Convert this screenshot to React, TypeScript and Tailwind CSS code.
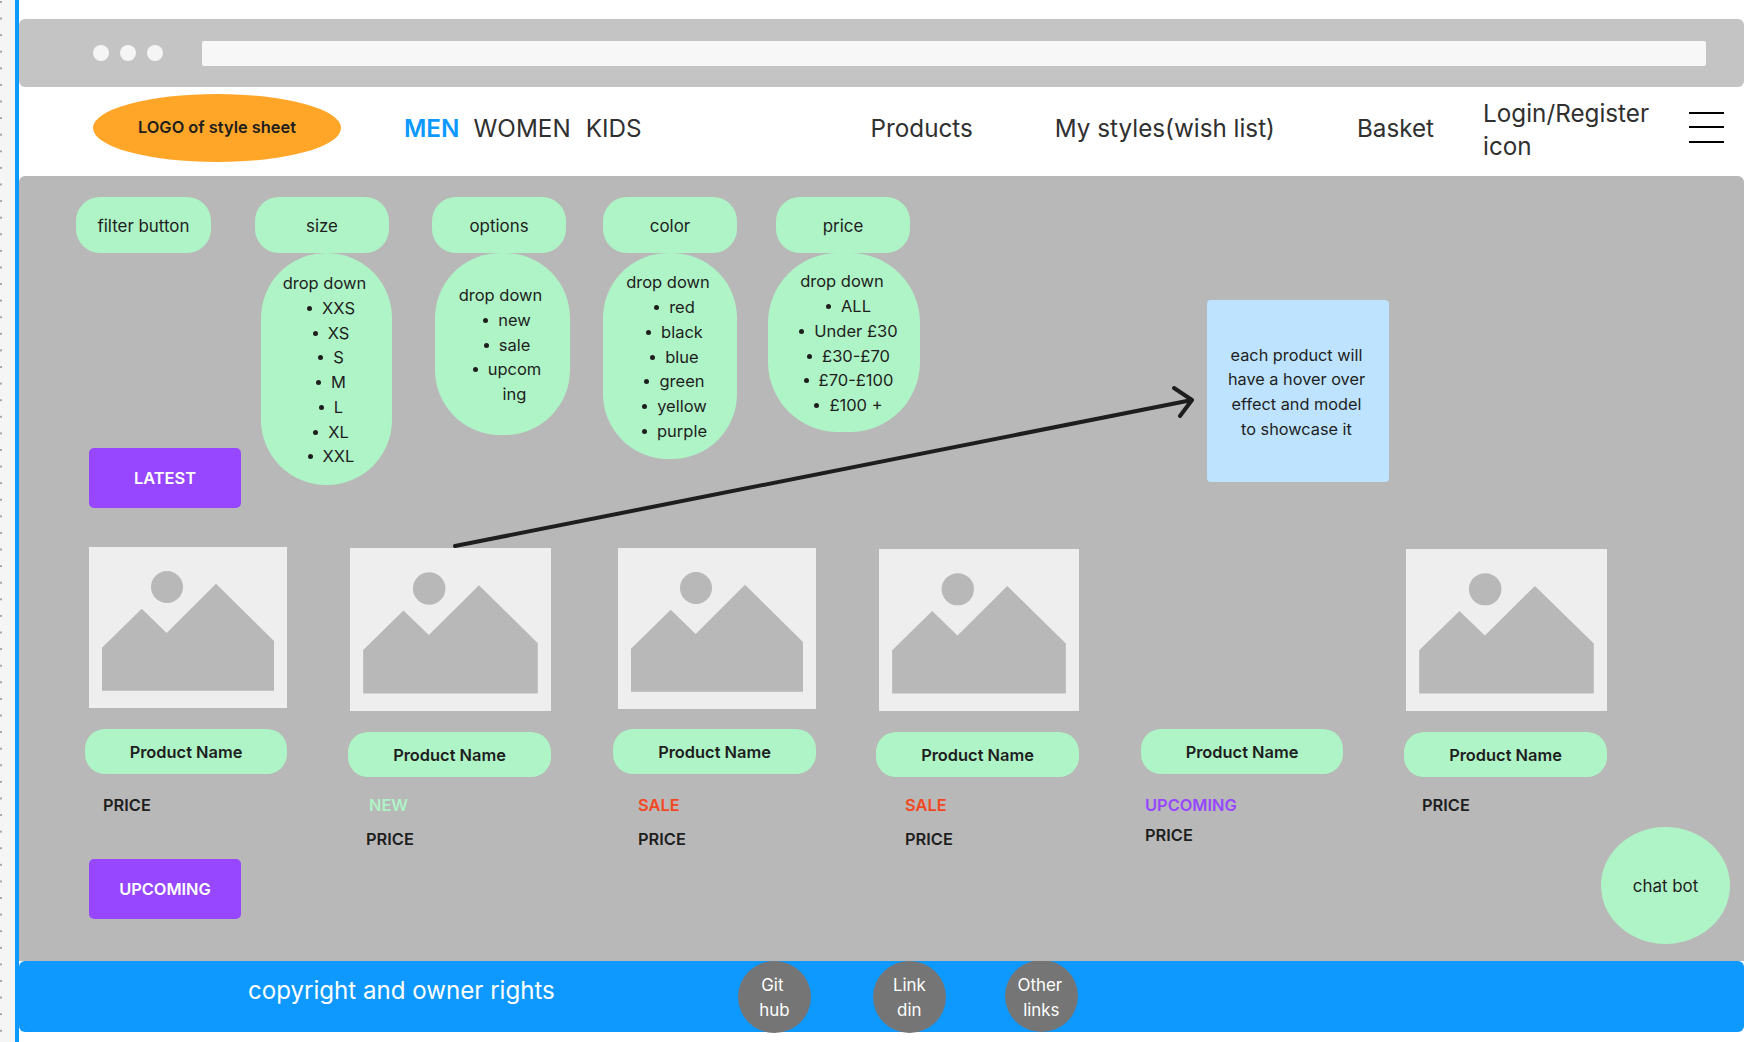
const navText = "text-[24.25px] text-[#303030]";
const pill = "flex items-center justify-center h-[56px] pt-[4px] rounded-[24px] bg-[#aff4c6] text-[16.9px] text-[#1e1e1e]";
const blob = "flex flex-col justify-center pt-[2px] bg-[#aff4c6] text-[16.5px] leading-[24.75px] text-[#1e1e1e] text-center";
const purpleBtn = "flex items-center justify-center w-[152px] h-[60px] pt-[1px] rounded-[5px] bg-[#9747ff] text-[16.4px] font-semibold text-white";
const social = "flex flex-col items-center justify-center w-[73px] h-[72px] pt-[3px] rounded-[50%] bg-[#757575] text-[16.9px] leading-[24.75px] text-white";

function Dropdown({ items, className }: { items: string[][]; className: string }) {
  return (
    <div className={`${blob} ${className}`}>
      <div className="pr-[4px]">drop down</div>
      <ul className="pl-[24px]">
        {items.map((lines) => (
          <li key={lines[0]}>
            <span className="relative inline-block">
              {/* bullet sits just left of the first line */}
              <span className="absolute -left-[15px] top-[10px] w-[5px] h-[5px] rounded-full bg-[#1e1e1e]" />
              {lines.map((line) => (
                <span key={line} className="block">
                  {line}
                </span>
              ))}
            </span>
          </li>
        ))}
      </ul>
    </div>
  );
}

function FilterColumn({ label, className, children }: { label: string; className: string; children: React.ReactNode }) {
  return (
    <div className={`flex flex-col w-[134px] ${className}`}>
      <div className={`${pill} w-[134px]`}>{label}</div>
      {children}
    </div>
  );
}

// placeholder thumbnail, stretched to whatever box it sits in
function Thumb({ className }: { className: string }) {
  return (
    <div className={`bg-[#eeeeee] ${className}`}>
      <svg viewBox="0 0 198 161" preserveAspectRatio="none" className="w-full h-full block">
        <circle cx="78" cy="40" r="16" fill="#b8b8b8" />
        <polygon points="13,100.7 52.7,61.7 77.7,86 127,36.7 185,94 185,143.7 13,143.7" fill="#b8b8b8" />
      </svg>
    </div>
  );
}

function ProductPill({ className }: { className: string }) {
  return (
    <div className={`flex items-center justify-center h-[45px] pt-[1px] rounded-[20px] bg-[#aff4c6] text-[16.4px] font-semibold text-[#1e1e1e] ${className}`}>
      Product Name
    </div>
  );
}

const toLines = (items: string[]) => items.map((item) => [item]);

export default function App() {
  return (
    <div className="flex w-[1764px] h-[1042px] overflow-hidden bg-white font-['Inter',sans-serif]">
      {/* Left ruler and selection line */}
      <div className="w-[15px] h-full bg-[#f5f5f5] bg-[radial-gradient(circle_at_1px_2px,#a8a8a8_1px,transparent_1.5px)] bg-[length:15px_16.6px]" />
      <div className="w-[4px] h-full bg-[#0d99ff]" />

      <div className="flex flex-col w-[1725px] pt-[19px]">
        {/* Browser chrome */}
        <div className="flex items-center h-[68px] rounded-[6px] bg-[#c4c4c4]">
          <div className="flex gap-[11px] ml-[74px]">
            <span className="w-[16px] h-[16px] rounded-full bg-[#f5f5f5]" />
            <span className="w-[16px] h-[16px] rounded-full bg-[#f5f5f5]" />
            <span className="w-[16px] h-[16px] rounded-full bg-[#f5f5f5]" />
          </div>
          <div className="ml-[39px] w-[1504px] h-[25px] rounded-[2px] bg-[#f7f7f7]" />
        </div>

        {/* Nav */}
        <div className="flex items-center h-[89px] pb-[4px]">
          <div className="flex items-center justify-center ml-[74px] -mt-[4px] w-[248px] h-[68px] rounded-[50%] bg-[#ffa629] text-[16.4px] font-semibold text-[#1e1e1e]">
            LOGO of style sheet
          </div>
          <span className="ml-[63px] text-[24.25px] font-semibold text-[#0d99ff]">MEN</span>
          <span className={`ml-[14px] ${navText}`}>WOMEN</span>
          <span className={`ml-[15px] ${navText}`}>KIDS</span>
          <span className={`ml-[229px] ${navText}`}>Products</span>
          <span className={`ml-[82px] ${navText}`}>My styles(wish list)</span>
          <span className={`ml-[82px] ${navText}`}>Basket</span>
          <span className={`ml-[49px] w-[180px] leading-[33px] ${navText}`}>Login/Register icon</span>
          <div className="flex flex-col gap-[12.5px] ml-[26px] mb-[5px]">
            <span className="block w-[35px] h-[2px] bg-black" />
            <span className="block w-[35px] h-[2px] bg-black" />
            <span className="block w-[35px] h-[2px] bg-black" />
          </div>
        </div>

        {/* Main canvas */}
        <div className="relative h-[785px] rounded-t-[6px] bg-[#b8b8b8]">
          <div className="flex items-start h-[371px] pt-[21px]">
            <div className="flex flex-col w-[135px] ml-[57px]">
              <div className={`${pill} w-[135px]`}>filter button</div>
              <div className={`${purpleBtn} ml-[13px] mt-[195px]`}>LATEST</div>
            </div>

            <FilterColumn label="size" className="ml-[44px]">
              <Dropdown
                items={toLines(["XXS", "XS", "S", "M", "L", "XL", "XXL"])}
                className="ml-[6px] w-[131px] h-[232px] rounded-[65px]"
              />
            </FilterColumn>

            <FilterColumn label="options" className="ml-[43px]">
              <Dropdown
                items={[["new"], ["sale"], ["upcom", "ing"]]}
                className="ml-[3px] w-[135px] h-[182px] rounded-[65px]"
              />
            </FilterColumn>

            <FilterColumn label="color" className="ml-[37px]">
              <Dropdown
                items={toLines(["red", "black", "blue", "green", "yellow", "purple"])}
                className="w-[134px] h-[206px] rounded-[65px]"
              />
            </FilterColumn>

            <FilterColumn label="price" className="ml-[39px]">
              <Dropdown
                items={toLines(["ALL", "Under £30", "£30-£70", "£70-£100", "£100 +"])}
                className="-ml-[8px] w-[152px] h-[179px] rounded-[70px]"
              />
            </FilterColumn>

            <div className="flex items-center justify-center ml-[297px] mt-[103px] w-[182px] h-[182px] pt-[2px] pr-[3px] rounded-[4px] bg-[#bde3ff] text-[16.3px] leading-[24.75px] text-center text-[#1e1e1e]">
              <p>
                each product will
                <br />
                have a hover over
                <br />
                effect and model
                <br />
                to showcase it
              </p>
            </div>
          </div>

          {/* Products */}
          <div className="flex items-start pl-[66px] text-[16.4px] font-semibold text-[#1e1e1e]">
            <div className="w-[202px]">
              <Thumb className="ml-[4px] w-[198px] h-[161px]" />
              <ProductPill className="mt-[21px]" />
              <div className="mt-[19px] ml-[18px]">PRICE</div>
              <div className={`${purpleBtn} ml-[4px] mt-[41px]`}>UPCOMING</div>
            </div>

            <div className="ml-[61px] w-[203px]">
              <Thumb className="mt-[1px] ml-[2px] w-[201px] h-[163px]" />
              <ProductPill className="mt-[21px]" />
              <div className="mt-[16px] ml-[21px] text-[#aff4c6]">NEW</div>
              <div className="mt-[9px] ml-[18px]">PRICE</div>
            </div>

            <div className="ml-[62px] w-[203px]">
              <Thumb className="mt-[1px] ml-[5px] w-[198px] h-[161px]" />
              <ProductPill className="mt-[20px]" />
              <div className="mt-[19px] ml-[25px] text-[#f24822]">SALE</div>
              <div className="mt-[9px] ml-[25px]">PRICE</div>
            </div>

            <div className="ml-[60px] w-[203px]">
              <Thumb className="mt-[2px] ml-[3px] w-[200px] h-[162px]" />
              <ProductPill className="mt-[21px]" />
              <div className="mt-[16px] ml-[29px] text-[#f24822]">SALE</div>
              <div className="mt-[9px] ml-[29px]">PRICE</div>
            </div>

            <div className="ml-[62px] w-[202px]">
              <ProductPill className="mt-[182px]" />
              <div className="mt-[19px] ml-[4px] text-[#9747ff]">UPCOMING</div>
              <div className="mt-[5px] ml-[4px]">PRICE</div>
            </div>

            <div className="ml-[61px] w-[203px]">
              <Thumb className="mt-[2px] ml-[2px] w-[201px] h-[162px]" />
              <ProductPill className="mt-[21px]" />
              <div className="mt-[16px] ml-[18px]">PRICE</div>
            </div>
          </div>

          {/* Arrow from product to note */}
          <svg className="absolute left-0 top-0 w-[1725px] h-[784px] pointer-events-none" viewBox="0 0 1725 784" fill="none">
            <path
              d="M436 370 L1173 224 M1155 212 L1173 224 L1161 240"
              stroke="#1e1e1e"
              strokeWidth="4"
              strokeLinecap="round"
              strokeLinejoin="round"
            />
          </svg>

          <div className="absolute left-[1582px] top-[651px] flex items-center justify-center w-[129px] h-[117px] pt-[2px] rounded-[50%] bg-[#aff4c6] text-[16.9px] text-[#1e1e1e]">
            chat bot
          </div>
        </div>

        {/* Footer */}
        <div className="flex items-center h-[71px] rounded-[6px] bg-[#0d99ff]">
          <span className="ml-[229px] mb-[10px] text-[24.1px] text-white">copyright and owner rights</span>
          <div className={`${social} ml-[183px]`}>
            <span className="pr-[4px]">Git</span>
            <span>hub</span>
          </div>
          <div className={`${social} ml-[62px]`}>
            <span>Link</span>
            <span>din</span>
          </div>
          <div className={`${social} ml-[59px] -mt-[1px]`}>
            <span className="pr-[3px]">Other</span>
            <span>links</span>
          </div>
        </div>
      </div>
    </div>
  );
}
